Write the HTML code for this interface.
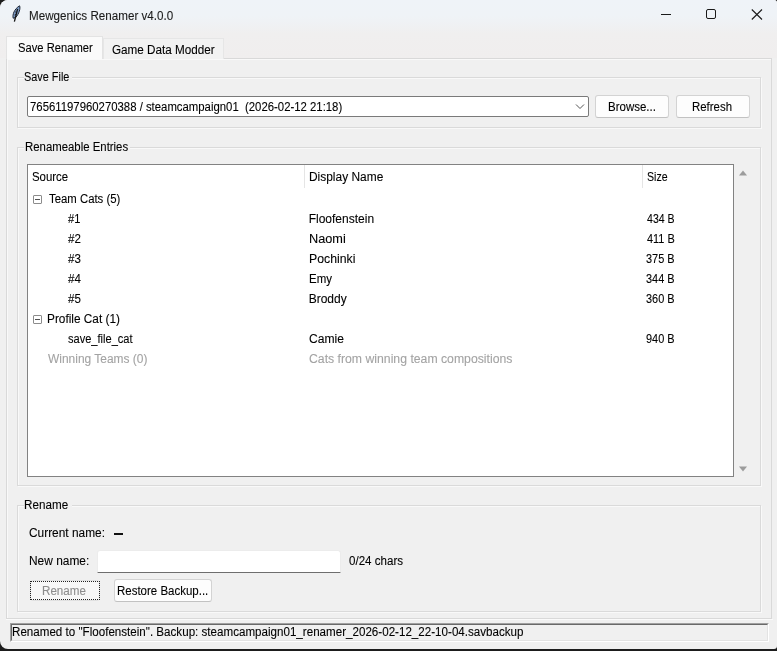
<!DOCTYPE html>
<html><head><meta charset="utf-8">
<style>
*{box-sizing:border-box;margin:0;padding:0}
html,body{width:777px;height:651px;overflow:hidden;background:#1d1d1d}
body{position:relative;font-family:"Liberation Sans",sans-serif;font-size:12px;color:#000}
.a{position:absolute}
.t{position:absolute;white-space:pre;line-height:14px;font-size:12px;transform-origin:0 0;-webkit-text-stroke:0.1px currentColor;filter:grayscale(1)}
#win{position:absolute;left:0;top:0;width:777px;height:649px;background:#f0f0f0;border-radius:8px 3px 3px 8px;overflow:hidden}
.lf{position:absolute;border:1px solid #dadada;box-shadow:inset 1px 1px 0 #f9f9f9,1px 1px 0 #f9f9f9}
.btn{position:absolute;background:#fdfdfd;border:1px solid #d3d3d3;border-bottom-color:#c2c2c2;border-radius:3px}
</style></head><body>
<div id="win">
  <div class="a" style="left:0;top:0;width:777px;height:58px;background:linear-gradient(#eff3f8 0px,#eff3f7 16px,#f0efef 34px,#f0eeee 58px)"></div>
  <!-- feather icon -->
  <svg class="a" style="left:10px;top:4px" width="12" height="20" viewBox="0 0 12 20">
    <path d="M9.6 1.8 C10.6 4.5 9.2 9.5 5.6 13.6 L3.2 14.2 C2.2 10.8 4.2 5 9.6 1.8 Z" fill="#7d9cc6" stroke="#1c2433" stroke-width="1"/>
    <path d="M7.6 5 L4.4 17.6" stroke="#151515" stroke-width="1.3"/>
    <path d="M5.2 8.2 L6.4 7.4 M4.6 11 L6 10.2" stroke="#1c2433" stroke-width="1"/>
  </svg>
  <!-- window controls -->
  <div class="a" style="left:661px;top:14px;width:10px;height:1px;background:#1a1a1a"></div>
  <div class="a" style="left:706px;top:9px;width:10px;height:10px;border:1px solid #1a1a1a;border-radius:2px"></div>
  <svg class="a" style="left:751px;top:9px" width="12" height="11" viewBox="0 0 12 11"><path d="M0.8 0.5 L11 10.5 M11 0.5 L0.8 10.5" stroke="#1a1a1a" stroke-width="1.1"/></svg>

  <!-- notebook pane -->
  <div class="a" style="left:6px;top:58px;width:766px;height:561px;border:1px solid #d9d9d9;background:#f0f0f0;box-shadow:inset 1px 1px 0 #f9f9f9"></div>
  <div class="a" style="left:6px;top:619px;width:767px;height:1px;background:#fafafa"></div>
  <!-- tabs -->
  <div class="a" style="left:103px;top:38px;width:121px;height:21px;border:1px solid #e6e6e6;border-bottom:none;background:#f2f2f2"></div>
  <div class="a" style="left:6px;top:36px;width:97px;height:23px;border:1px solid #e3e3e3;border-bottom:none;background:#fafafa"></div>

  <!-- Save File labelframe -->
  <div class="lf" style="left:17px;top:77px;width:744px;height:51px"></div>
  <div class="a" style="left:24px;top:72px;width:48px;height:10px;background:#f0f0f0"></div>
  <div class="a" style="left:27px;top:96px;width:562px;height:21px;background:#fff;border:1px solid #7a7a7a;border-radius:2px"></div>
  <svg class="a" style="left:575px;top:103px" width="10" height="7" viewBox="0 0 10 7"><path d="M1 1.5 L5 5.5 L9 1.5" fill="none" stroke="#555" stroke-width="1"/></svg>
  <div class="btn" style="left:595px;top:95px;width:74px;height:23px"></div>
  <div class="btn" style="left:676px;top:95px;width:74px;height:23px"></div>

  <!-- Renameable entries -->
  <div class="lf" style="left:17px;top:147px;width:744px;height:339px"></div>
  <div class="a" style="left:24px;top:142px;width:106px;height:10px;background:#f0f0f0"></div>
  <div class="a" style="left:27px;top:164px;width:707px;height:313px;background:#fff;border:1px solid #828282"></div>
  <div class="a" style="left:304px;top:165px;width:1px;height:23px;background:#e5e5e5"></div>
  <div class="a" style="left:642px;top:165px;width:1px;height:23px;background:#e5e5e5"></div>

  <!-- expand boxes -->
  <div class="a" style="left:33px;top:195px;width:9px;height:9px;border:1px solid #8c8c8c;border-radius:1px;background:#fff"></div>
  <div class="a" style="left:35px;top:199px;width:5px;height:1px;background:#505050"></div>
  <div class="a" style="left:33px;top:315px;width:9px;height:9px;border:1px solid #8c8c8c;border-radius:1px;background:#fff"></div>
  <div class="a" style="left:35px;top:319px;width:5px;height:1px;background:#505050"></div>

  <!-- scrollbar arrows -->
  <svg class="a" style="left:738px;top:169px" width="10" height="8" viewBox="0 0 10 8"><path d="M1 6.5 L5 1.5 L9 6.5 Z" fill="#9c9c9c"/></svg>
  <svg class="a" style="left:738px;top:465px" width="10" height="8" viewBox="0 0 10 8"><path d="M1 1.5 L5 6.5 L9 1.5 Z" fill="#9c9c9c"/></svg>

  <!-- Rename labelframe -->
  <div class="lf" style="left:17px;top:505px;width:744px;height:107px"></div>
  <div class="a" style="left:24px;top:500px;width:48px;height:10px;background:#f0f0f0"></div>
  <div class="a" style="left:114px;top:533px;width:9px;height:2px;background:#111"></div>
  <div class="a" style="left:97px;top:550px;width:244px;height:23px;background:#fff;border:1px solid #ececec;border-bottom:1px solid #6e6e6e;border-radius:3px 3px 0 0"></div>
  <div class="btn" style="left:30px;top:580px;width:70px;height:21px;background:#f7f7f7;border-color:#e0e0e0"></div>
  <div class="a" style="left:30px;top:581px;width:70px;height:19px;border:1px dotted #222"></div>
  <div class="btn" style="left:114px;top:579px;width:98px;height:23px"></div>

  <!-- status bar -->
  <div class="a" style="left:10px;top:623px;width:759px;height:19px;border-top:1px solid #a0a0a0;border-left:1px solid #a0a0a0;border-bottom:1px solid #fff;border-right:1px solid #fff"></div>
  <div class="a" style="left:11px;top:624px;width:757px;height:17px;border-top:1px solid #696969;border-left:1px solid #696969;border-bottom:1px solid #e3e3e3;border-right:1px solid #e3e3e3"></div>
<div class="t" style="left:28.53px;top:9px;transform:scaleX(0.9694);color:#1b1b1b">Mewgenics Renamer v4.0.0</div>
<div class="t" style="left:17.57px;top:41px;transform:scaleX(0.9329);color:#000">Save Renamer</div>
<div class="t" style="left:111.73px;top:43px;transform:scaleX(0.9743);color:#000">Game Data Modder</div>
<div class="t" style="left:24.49px;top:70px;transform:scaleX(0.9082);color:#000">Save File</div>
<div class="t" style="left:30.05px;top:100px;transform:scaleX(0.9460);color:#000">76561197960270388 / steamcampaign01  (2026-02-12 21:18)</div>
<div class="t" style="left:607.54px;top:100px;transform:scaleX(0.9583);color:#000">Browse...</div>
<div class="t" style="left:692.45px;top:100px;transform:scaleX(0.9525);color:#000">Refresh</div>
<div class="t" style="left:24.95px;top:140px;transform:scaleX(0.9486);color:#000">Renameable Entries</div>
<div class="t" style="left:31.55px;top:170px;transform:scaleX(0.9514);color:#000">Source</div>
<div class="t" style="left:308.51px;top:170px;transform:scaleX(0.9945);color:#000">Display Name</div>
<div class="t" style="left:646.72px;top:170px;transform:scaleX(0.8818);color:#000">Size</div>
<div class="t" style="left:49.30px;top:192px;transform:scaleX(0.9467);color:#000">Team Cats (5)</div>
<div class="t" style="left:68.00px;top:212px;transform:scaleX(0.9231);color:#000">#1</div>
<div class="t" style="left:68.00px;top:232px;transform:scaleX(0.9615);color:#000">#2</div>
<div class="t" style="left:68.00px;top:252px;transform:scaleX(0.9615);color:#000">#3</div>
<div class="t" style="left:68.00px;top:272px;transform:scaleX(0.9615);color:#000">#4</div>
<div class="t" style="left:68.00px;top:292px;transform:scaleX(0.9615);color:#000">#5</div>
<div class="t" style="left:308.70px;top:212px;transform:scaleX(1.0000);color:#000">Floofenstein</div>
<div class="t" style="left:308.64px;top:232px;transform:scaleX(1.0606);color:#000">Naomi</div>
<div class="t" style="left:308.68px;top:252px;transform:scaleX(1.0227);color:#000">Pochinki</div>
<div class="t" style="left:308.74px;top:272px;transform:scaleX(0.9565);color:#000">Emy</div>
<div class="t" style="left:308.70px;top:292px;transform:scaleX(1.0000);color:#000">Broddy</div>
<div class="t" style="left:647.10px;top:212px;transform:scaleX(0.8806);color:#000">434 B</div>
<div class="t" style="left:647.10px;top:232px;transform:scaleX(0.9100);color:#000">411 B</div>
<div class="t" style="left:646.19px;top:252px;transform:scaleX(0.9100);color:#000">375 B</div>
<div class="t" style="left:646.19px;top:272px;transform:scaleX(0.9100);color:#000">344 B</div>
<div class="t" style="left:646.19px;top:292px;transform:scaleX(0.9100);color:#000">360 B</div>
<div class="t" style="left:47.41px;top:312px;transform:scaleX(0.9861);color:#000">Profile Cat (1)</div>
<div class="t" style="left:68.40px;top:332px;transform:scaleX(0.9214);color:#000">save_file_cat</div>
<div class="t" style="left:308.69px;top:332px;transform:scaleX(1.0091);color:#000">Camie</div>
<div class="t" style="left:646.19px;top:332px;transform:scaleX(0.9100);color:#000">940 B</div>
<div class="t" style="left:48.40px;top:352px;transform:scaleX(0.9960);color:#a3a3a3">Winning Teams (0)</div>
<div class="t" style="left:308.78px;top:352px;transform:scaleX(1.0202);color:#a3a3a3">Cats from winning team compositions</div>
<div class="t" style="left:24.43px;top:498px;transform:scaleX(0.9727);color:#000">Rename</div>
<div class="t" style="left:28.71px;top:526px;transform:scaleX(0.9907);color:#000">Current name:</div>
<div class="t" style="left:28.71px;top:554px;transform:scaleX(0.9932);color:#000">New name:</div>
<div class="t" style="left:348.90px;top:554px;transform:scaleX(0.9643);color:#000">0/24 chars</div>
<div class="t" style="left:42.43px;top:584px;transform:scaleX(0.9682);color:#8d8d8d">Rename</div>
<div class="t" style="left:117.44px;top:584px;transform:scaleX(0.9570);color:#000">Restore Backup...</div>
<div class="t" style="left:11.53px;top:625px;transform:scaleX(0.9672);color:#000">Renamed to &quot;Floofenstein&quot;. Backup: steamcampaign01_renamer_2026-02-12_22-10-04.savbackup</div>
</div>
</body></html>
